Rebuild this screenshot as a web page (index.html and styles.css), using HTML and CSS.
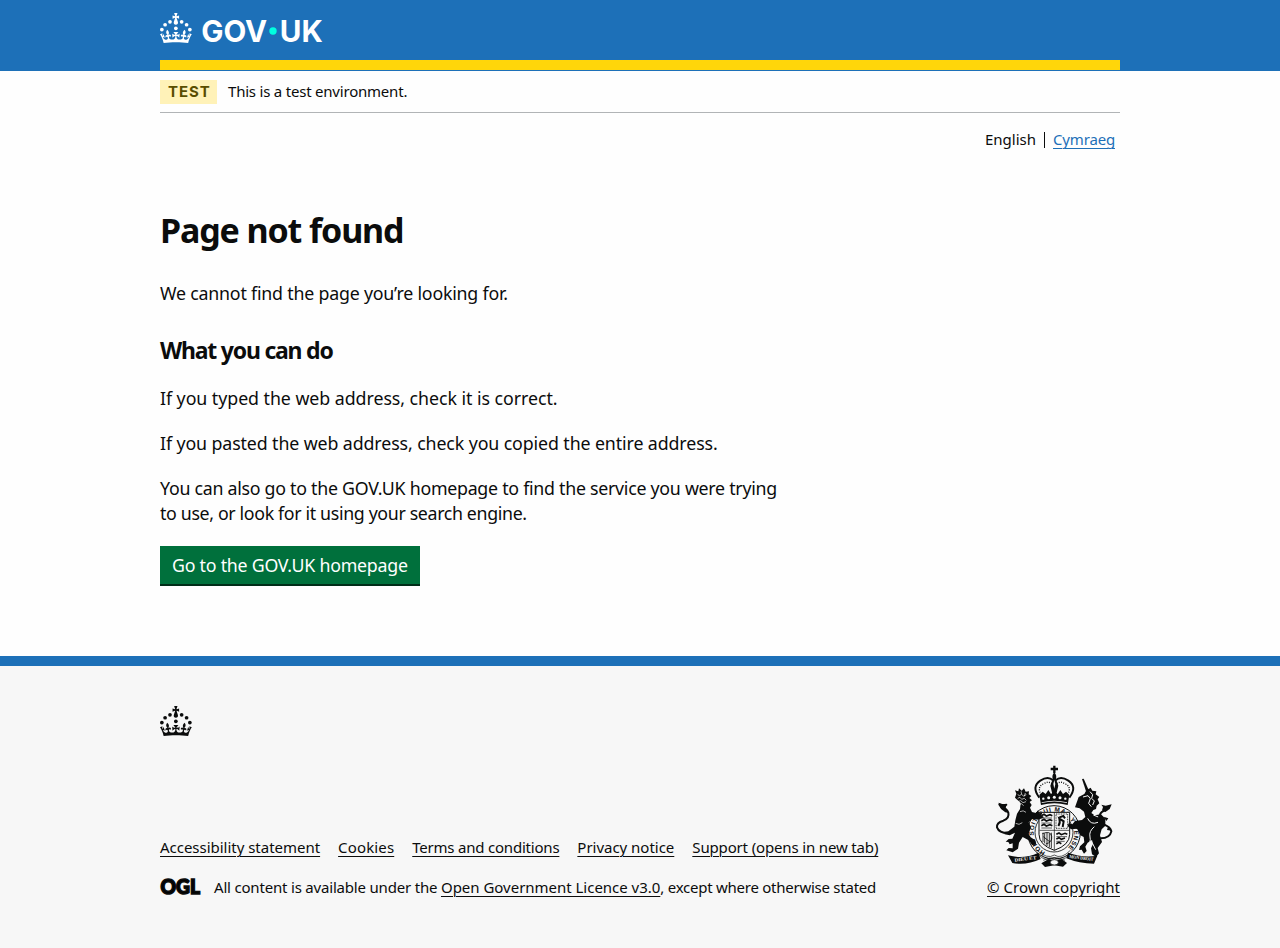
FILE: index.html
```
<!DOCTYPE html>
<html lang="en">
<head>
<meta charset="utf-8">
<title>Page not found</title>
<link rel="stylesheet" href="styles.css">
</head>
<body>
<svg class="defs" width="0" height="0" aria-hidden="true">
  <symbol id="crown" viewBox="0 0 64 60">
    <circle cx="20" cy="17.6" r="3.7"/><circle cx="10.2" cy="23.5" r="3.7"/><circle cx="3.7" cy="33.2" r="3.7"/><circle cx="31.7" cy="30.6" r="3.7"/><circle cx="43.3" cy="17.6" r="3.7"/><circle cx="53.2" cy="23.5" r="3.7"/><circle cx="59.7" cy="33.2" r="3.7"/>
    <path d="M33.1,9.8c.2-.1.3-.3.5-.5l4.6,2.4v-6.8l-4.6,1.5c-.1-.2-.3-.3-.5-.5l1.9-5.9h-6.7l1.9,5.9c-.2.1-.3.3-.5.5l-4.6-1.5v6.8l4.6-2.4c.1.2.3.3.5.5l-2.6,8c-.9,2.8,1.2,5.7,4.1,5.7h0c3,0,5.1-2.9,4.1-5.7l-2.6-8ZM37,37.9s-3.4,3.8-4.1,6.1c2.2,0,4.2-.5,6.4-2.8l-.7,8.5c-2-2.8-4.4-4.1-5.7-3.8.1,3.1.5,6.7,5.8,7.2,3.7.3,6.7-1.5,7-3.8.4-2.6-2-4.3-3.7-1.6-1.4-4.5,2.4-6.1,4.9-3.2-1.9-4.5-1.8-7.7,2.4-10.9,3,4,2.6,7.3-1.2,11.1,2.4-1.3,6.2,0,4,4.6-1.2-2.8-3.7-2.2-4.2.2-.3,1.7.7,3.7,3,4.2,1.9.3,4.7-.9,7-5.9-1.3,0-2.4.7-3.9,1.7l2.4-8c.6,2.3,1.4,3.7,2.2,4.5.6-1.6.5-2.8,0-5.3l5,1.8c-2.6,3.6-5.2,8.7-7.3,17.5-7.4-1.1-15.7-1.7-24.5-1.7h0c-8.8,0-17.1.6-24.5,1.7-2.1-8.9-4.7-13.9-7.3-17.5l5-1.8c-.5,2.5-.6,3.7,0,5.3.8-.8,1.6-2.3,2.2-4.5l2.4,8c-1.5-1-2.6-1.7-3.9-1.7,2.3,5,5.2,6.2,7,5.9,2.3-.4,3.3-2.4,3-4.2-.5-2.4-3-3.1-4.2-.2-2.2-4.6,1.6-6,4-4.6-3.7-3.7-4.2-7.1-1.2-11.1,4.2,3.2,4.3,6.4,2.4,10.9,2.5-2.8,6.3-1.3,4.9,3.2-1.8-2.7-4.1-1-3.7,1.6.3,2.3,3.3,4.1,7,3.8,5.4-.5,5.7-4.2,5.8-7.2-1.3-.2-3.7,1-5.7,3.8l-.7-8.5c2.2,2.3,4.2,2.7,6.4,2.8-.7-2.3-4.1-6.1-4.1-6.1h10.6,0Z"/>
  </symbol>
</svg>

<header class="header">
  <div class="container header-inner">
    <svg class="logo" viewBox="0 0 170 36" width="170" height="36" role="img" aria-label="GOV.UK">
      <use href="#crown" width="32" height="30"/>
      <text class="logo-text" x="41.2" y="28.9" textLength="66" lengthAdjust="spacingAndGlyphs">GOV</text>
      <circle class="logo-dot" cx="113" cy="18" r="3.7"/>
      <text class="logo-text" x="119.8" y="28.9" textLength="43" lengthAdjust="spacingAndGlyphs">UK</text>
    </svg>
  </div>
</header>

<div class="container">
  <div class="phase-banner">
    <strong class="tag">TEST</strong>
    <span class="phase-text t22">This is a test environment.</span>
  </div>
  <nav class="languages">
    <span class="language-current">English</span>
    <a class="language-link" href="#">Cymraeg</a>
  </nav>
  <main class="main">
    <h1 class="heading-l">Page not found</h1>
    <p class="body t22">We cannot find the page you’re looking for.</p>
    <h2 class="heading-m">What you can do</h2>
    <p class="body t05">If you typed the web address, check it is correct.</p>
    <p class="body t11">If you pasted the web address, check you copied the entire address.</p>
    <p class="body"><span class="t28">You can also go to the GOV.UK homepage to find the service you were trying</span><br><span class="t35">to use, or look for it using your search engine.</span></p>
    <a class="button" href="#">Go to the GOV.UK homepage</a>
  </main>
</div>

<footer class="footer">
  <div class="container">
    <svg class="footer-crown" width="32" height="30"><use href="#crown" width="32" height="30"/></svg>
    <div class="footer-meta">
      <div class="footer-main">
        <ul class="footer-links">
          <li><a class="footer-link" href="#">Accessibility statement</a></li>
          <li><a class="footer-link wide" href="#">Cookies</a></li>
          <li><a class="footer-link t22" href="#">Terms and conditions</a></li>
          <li><a class="footer-link" href="#">Privacy notice</a></li>
          <li><a class="footer-link t15" href="#">Support (opens in new tab)</a></li>
        </ul>
        <div class="licence">
          <svg class="ogl" width="41" height="28" viewBox="0 0 41 28" role="img" aria-label="OGL"><text class="ogl-text" x="0.6" y="21.2" textLength="39.4" lengthAdjust="spacingAndGlyphs">OGL</text></svg>
          <span><span class="t19">All content is available under the </span><a class="footer-link" href="#">Open Government Licence v3.0</a><span class="t24">, except where otherwise stated</span></span>
        </div>
      </div>
      <div class="copyright">
        <svg class="crest" width="118" height="104" viewBox="45 30 354 312" aria-hidden="true">
          <!-- imperial crown -->
          <g fill="none" stroke="#0b0c0c">
            <path stroke-width="6" d="M178 128Q153 95 181 77Q204 62 219 76M268 128Q293 95 265 77Q242 62 227 76"/>
            <path stroke-width="4" stroke-dasharray="3 4" d="M184 119Q170 98 189 87Q205 77 216 86M262 119Q276 98 257 87Q241 77 230 86"/>
            <path stroke-width="7" d="M223 32v22M212 42h22"/>
          </g>
          <path d="M223 52q8 8 5 20l7 20-6 25h-12l-6-25 7-20q-3-12 5-20z"/>
          <path fill="#f7f7f7" d="M223 75l3 12-3 14-3-14z"/>
          <path d="M178 120l10-10 9 7 8-12 8 12 10-8 10 8 8-12 8 12 9-7 10 10-5 30q-40-11-80 0z"/>
          <g fill="#f7f7f7"><circle cx="190" cy="131" r="3.5"/><circle cx="206" cy="128" r="4.5"/><circle cx="223" cy="127" r="4.5"/><circle cx="240" cy="128" r="4.5"/><circle cx="256" cy="131" r="3.5"/><path d="M185 142q38-10 76 0v2q-38-9-76 0z"/></g>
          <!-- garter and shield -->
          <ellipse cx="222" cy="232" rx="79" ry="80" fill="#f7f7f7" stroke="#0b0c0c" stroke-width="3"/>
          <ellipse cx="222" cy="232" rx="57" ry="59" fill="none" stroke="#0b0c0c" stroke-width="2.5"/>
          <path id="garter" fill="none" d="M196 291A61 64 0 1 1 248 291"/>
          <text class="garter-text"><textPath href="#garter" textLength="318">HONI SOIT QUI MAL Y PENSE</textPath></text>
          <path d="M177 172h92v66q0 32-46 48q-46-16-46-48z" fill="#f7f7f7" stroke="#0b0c0c" stroke-width="3"/>
          <g stroke="#0b0c0c" fill="none" stroke-width="2">
            <path d="M223 172v114M179 226h88"/>
            <path stroke-width="5" d="M184 182l8-4 7 5 11-4 7 3M184 197l8-4 7 5 11-4 7 3M184 212l8-4 7 5 11-4 7 3M229 238l8-4 7 5 11-4 7 3M229 252l8-4 7 5 11-4M229 266l8-4 7 4"/>
            <path stroke-width="2" d="M184 189h32M184 204h32M184 219h32M229 245h32M229 259h25"/>
            <path stroke-width="2.5" stroke-dasharray="3 2" d="M228 177h35v43h-35z"/>
            <path stroke-width="6" d="M235 213q7-10 3-22l13 8-3 17M238 187l12-4 5 7"/>
            <path stroke-width="2.5" d="M187 236q25-10 28 8t-18 23M190 245l20 16M189 233v28M194 235v30M201 233v40M208 235v42M214 233v46"/>
          </g>
          <!-- lion supporter -->
          <path d="M105 128l4-12-4-10 10 3 2-9 8 7 7-7 5 10 10-1-1 9 8 5-6 6 8 7-7 5 6 9-5 8 6 13 12 3 6-8 4 9 9-2-3 8 8 6-16 7-20-2-10 10 7 14-7 21 6 10 14 9 3 13-13 1-10-14-18-10-11 17-3 18-16 11-19-6 7-7 12 1 0-15-9 3-4-7-8-1 9-8 11-1 8-18-16 8-15-3-2-7 13-2 18-14 3-19 5-20 9-14 2-18z"/>
          <path fill="none" stroke="#f7f7f7" stroke-width="2" d="M113 119l6 3 5-4 7 5 8-4M113 130l7-3 5 6 8-3 6 6M113 140l9-3 7 6 9-3M115 151l9-5 7 6M123 109l2 9M136 114l-3 10M120 170q10-6 18 2M107 205q10 7 20-2"/>
          <path fill="none" stroke="#0b0c0c" stroke-width="6" stroke-linecap="round" d="M89 234q-31 2-38-17q-2-14 19-20q19-8 15-24q-5-14-20-14l-8-12 9 5 13-3"/>
          <path d="M55 143l12 4 13 1-3 12 9 14-10-2-12-9z"/>
          <!-- unicorn supporter -->
          <path d="M306 72l5-1 15 34-8 4z"/>
          <path d="M296 126l17-9 6-11 13-8 5 9 12 2-2 9 11 8-5 7 5 12-8 7-2 10-8 3-6 9 10 7 19-3 13 13 0 21-11 11-5 18 6 20-13 18 4 16-9 11-12-8-3-18 6-13-3-12-13 8-7 12 4 13-8 8-7-12-8 1 3-11 13-12-2-16-10-5-10-20-18 2-10-10 3-8 11 3 8-10 21-3 10-9-4-16-13-10-14-3z"/>
          <path fill="none" stroke="#f7f7f7" stroke-width="3" d="M309 126l15-4 7 9-5 14 8 10M330 110l8 9-3 11 8 8-5 12M323 190q9 21 31 12M343 215q-17 14-13 31t-10 27M336 262l11 22M340 180l15 6"/>
          <path fill="none" stroke="#0b0c0c" stroke-width="6" stroke-linecap="round" d="M362 250q28-1 32-21q-3-13-21-20q-19-11-14-27q3-14 20-17"/>
          <path d="M366 166l3-10-5-7 13 3 18-4-6 14-13 9zM371 185l14 5-6 8M384 215l12 12-15-2z"/>
          <!-- motto scroll -->
          <path fill="none" stroke="#0b0c0c" stroke-width="2" d="M171 286q31 28 52 14q21 14 48-14M175 300q24 22 48 8q24 14 44-8M190 316q33-17 65 0"/>
          <path d="M84 301q47 13 91-8l7 19q-42 20-85 12zM264 293q43 16 88 9l-10 24q-44 0-83-16zM184 325l22-13 17 7 22-7 16 12-12 11-26-4-28 5z"/>
          <ellipse cx="223" cy="322" rx="12" ry="8" fill="#f7f7f7" stroke="#0b0c0c" stroke-width="2"/>
          <text class="motto" transform="translate(104 320) rotate(-7)" textLength="66" lengthAdjust="spacingAndGlyphs">DIEU ET</text>
          <text class="motto" transform="translate(268 309) rotate(7)" textLength="72" lengthAdjust="spacingAndGlyphs">MON DROIT</text>
        </svg>
        <a class="footer-link wide-s" href="#">© Crown copyright</a>
      </div>
    </div>
  </div>
</footer>
</body>
</html>
```

FILE: styles.css
```
* { box-sizing: border-box; }
body { margin: 0; background: #fefefe; color: #0b0c0c; font: 15px/20px "Noto Sans", sans-serif; }
.defs { display: block; }
.container { width: 960px; margin: 0 auto; }
a { color: inherit; }

.header { height: 71px; background: #1d70b8; color: #fff; }
.header-inner { height: 70px; padding-top: 13px; border-bottom: 10px solid #ffd60a; }
.logo { display: block; fill: currentColor; }
.logo-text { font: 700 30px Inter, sans-serif; }
.logo-dot { fill: #00ffe0; }

.phase-banner { display: flex; align-items: center; gap: 11px; height: 42px; padding-top: 1px; border-bottom: 1px solid #b1b4b6; }
.phase-text { padding-bottom: 2px; }
.tag { width: 57px; height: 24px; padding-left: 8px; background: #fff2b8; color: #594d00; font-family: Inter, sans-serif; font-size: 15px; line-height: 24px; letter-spacing: .9px; white-space: nowrap; }

.languages { display: flex; justify-content: flex-end; padding: 16px 5px 0 0; }
.language-current { padding-right: 9px; }
.language-link { position: relative; padding-left: 8px; color: #1d70b8; letter-spacing: -.17px; text-underline-offset: 3px; text-decoration-thickness: 1px; }
.language-link::before { content: ""; position: absolute; left: -1px; top: 3px; width: 1px; height: 16px; background: #0b0c0c; }

.main { height: 507px; padding-top: 61px; }
.heading-l { margin: 0 0 31px; font-size: 34px; line-height: 40px; letter-spacing: -1.12px; }
.heading-m { margin: 0 0 20px; padding-top: 8px; font-size: 23px; line-height: 32px; letter-spacing: -1.22px; }
.body { margin: 0 0 20px; font-size: 17.8px; line-height: 25px; }
.button { display: block; width: 260px; height: 38px; margin-top: 20px; padding-left: 12px; background: #00703c; box-shadow: 0 2px 0 #002d18; color: #fff; font-size: 17.8px; line-height: 38px; letter-spacing: -.25px; text-decoration: none; white-space: nowrap; }

.footer { height: 292px; padding-top: 40px; border-top: 10px solid #1d70b8; background: #f7f7f7; }
.footer-crown { display: block; fill: #0b0c0c; }
.footer-meta { display: flex; justify-content: space-between; align-items: flex-end; height: 161px; }
.footer-links { display: flex; gap: 18px; margin: 0 0 20px; padding: 0; list-style: none; }
.footer-link { letter-spacing: -.02px; text-underline-offset: 3px; text-decoration-thickness: 1px; white-space: nowrap; }
.licence { display: flex; align-items: center; gap: 13px; height: 20px; }
.ogl { overflow: visible; }
.ogl-text { font: 900 20px Lato, sans-serif; stroke: #0b0c0c; stroke-width: 1.6px; }
.copyright { display: flex; flex-direction: column; align-items: flex-end; gap: 8px; }
.crest { margin-right: 7px; fill: #0b0c0c; }
.garter-text { font: 700 19px "Liberation Sans", sans-serif; }
.motto { fill: #f7f7f7; font: 700 14px "Liberation Serif", serif; }

.wide { letter-spacing: .14px; }
.wide-s { letter-spacing: .04px; }
.t05 { letter-spacing: -.05px; }
.t11 { letter-spacing: -.11px; }
.t15 { letter-spacing: -.15px; }
.t19 { letter-spacing: -.19px; }
.t22 { letter-spacing: -.21px; }
.t24 { letter-spacing: -.25px; }
.t28 { letter-spacing: -.27px; }
.t35 { letter-spacing: -.35px; }
```
